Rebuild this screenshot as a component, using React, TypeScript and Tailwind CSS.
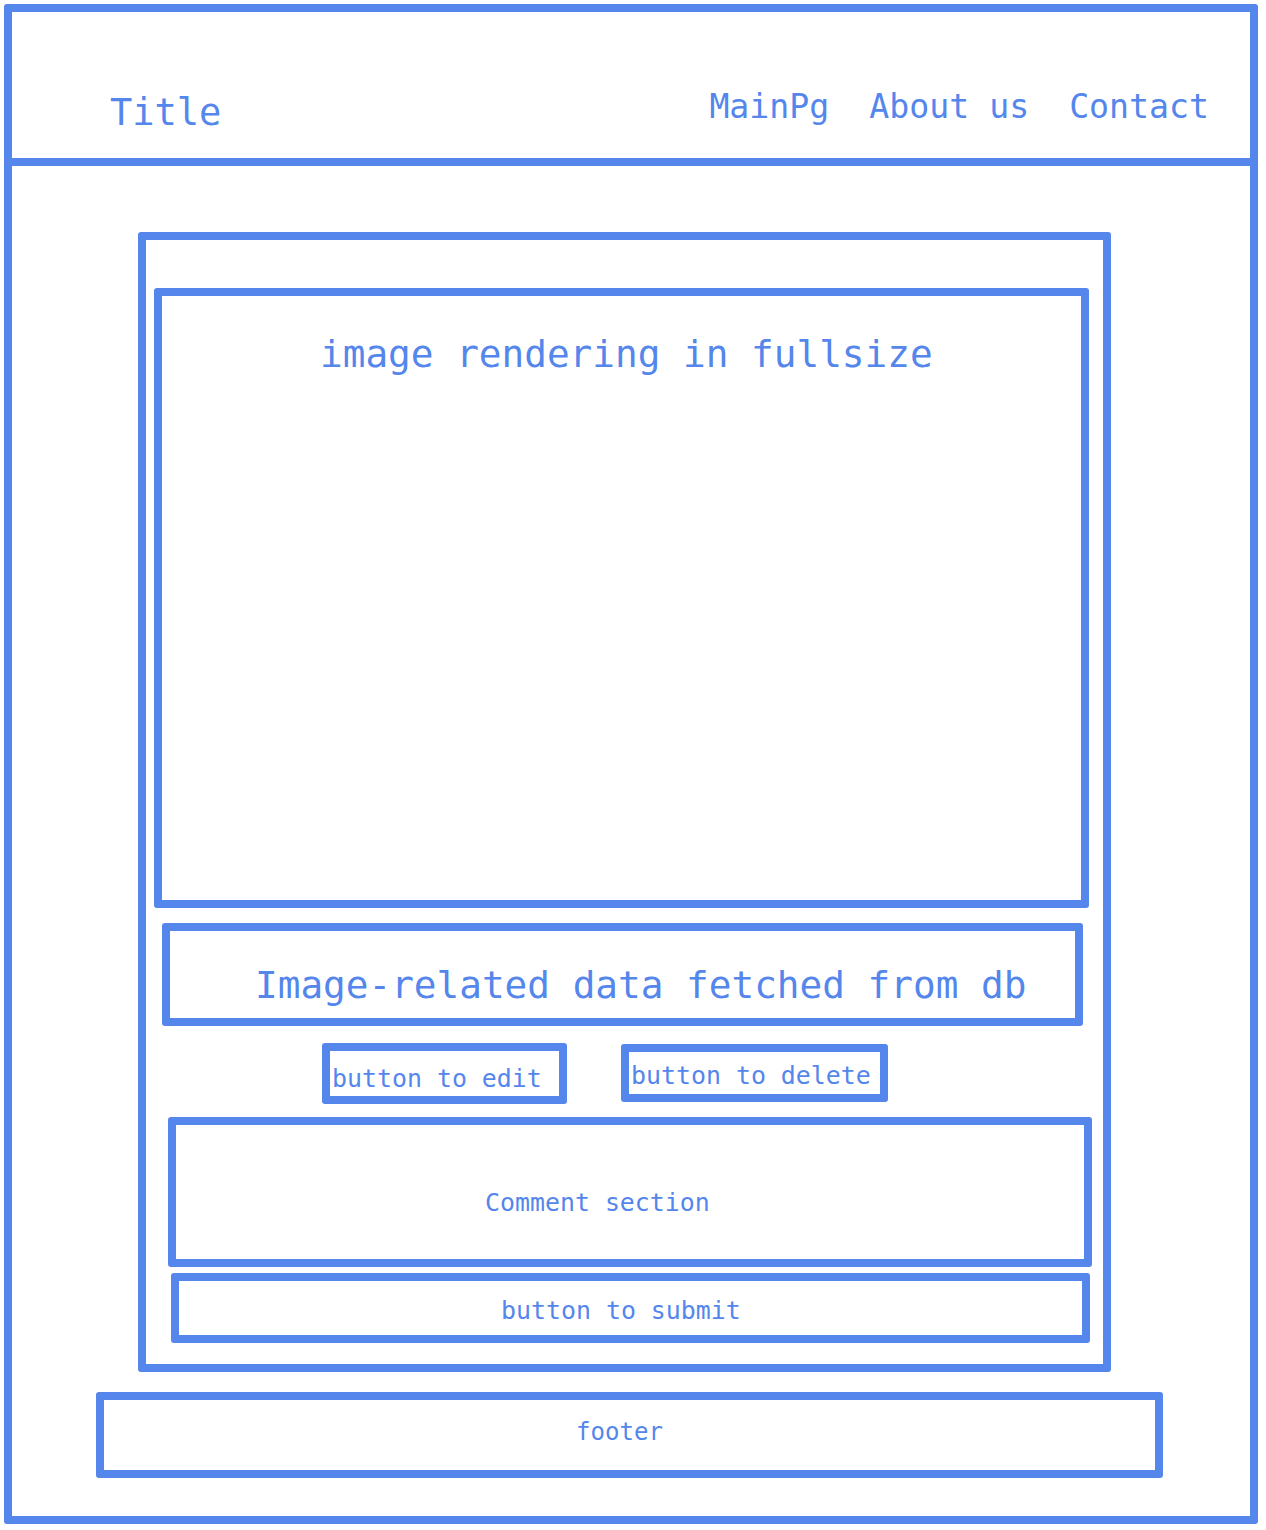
import React from 'react';

const mono = "font-['DejaVu_Sans_Mono',monospace] text-[#5486ec] leading-none whitespace-pre";
const box = 'border-8 border-[#5486ec] rounded-[3px]';

const NavLinks = () => {
    const links = ['MainPg', 'About us', 'Contact'];
    return (
        <nav className="flex gap-[40px] pt-[78px] pr-[41px]">
            {links.map((link) => (
                <span key={link} className={`${mono} text-[33.2px]`}>
                    {link}
                </span>
            ))}
        </nav>
    );
};

const ImageDetail: React.FC = () => {
    return (
        <div className={`${box} w-[973px] h-[1140px] ml-[126px] mt-[66px] flex flex-col items-start`}>
            <div className={`${box} w-[935px] h-[620px] ml-[8px] mt-[48px] pt-[40px] pl-[158px]`}>
                <span className={`${mono} text-[37.7px]`}>image rendering in fullsize</span>
            </div>

            <div className={`${box} w-[921px] h-[103px] ml-[16px] mt-[15px] pt-[36px] pl-[85px]`}>
                <span className={`${mono} text-[37.7px]`}>Image-related data fetched from db</span>
            </div>

            <div className="flex items-start gap-[54px] ml-[176px] mt-[17px]">
                <button className={`${box} w-[245px] h-[61px] text-left pt-[12px] pl-[2px]`}>
                    <span className={`${mono} text-[24.9px]`}>button to edit</span>
                </button>
                <button className={`${box} w-[267px] h-[58px] mt-[1px] text-left pt-[7px] pl-[2px]`}>
                    <span className={`${mono} text-[24.9px]`}>button to delete</span>
                </button>
            </div>

            <div className={`${box} w-[924px] h-[150px] ml-[22px] mt-[13px] pt-[66px] pl-[309px]`}>
                <span className={`${mono} text-[24.9px]`}>Comment section</span>
            </div>

            <button className={`${box} w-[919px] h-[70px] ml-[25px] mt-[6px] text-left pt-[8px] pl-[322px]`}>
                <span className={`${mono} text-[24.9px]`}>button to submit</span>
            </button>
        </div>
    );
};

const App: React.FC = () => {
    return (
        <div className="w-[1266px] h-[1530px] bg-white p-[4px]">
            <div className={`${box} w-[1254px] h-[1520px] flex flex-col`}>
                <header className="h-[154px] border-b-8 border-[#5486ec] flex justify-between">
                    <span className={`${mono} text-[37px] pt-[82px] pl-[98px]`}>Title</span>
                    <NavLinks />
                </header>

                <ImageDetail />

                <footer className={`${box} w-[1067px] h-[86px] ml-[84px] mt-[20px] pt-[20px] pl-[472px]`}>
                    <span className={`${mono} text-[24.1px]`}>footer</span>
                </footer>
            </div>
        </div>
    );
};

export default App;
